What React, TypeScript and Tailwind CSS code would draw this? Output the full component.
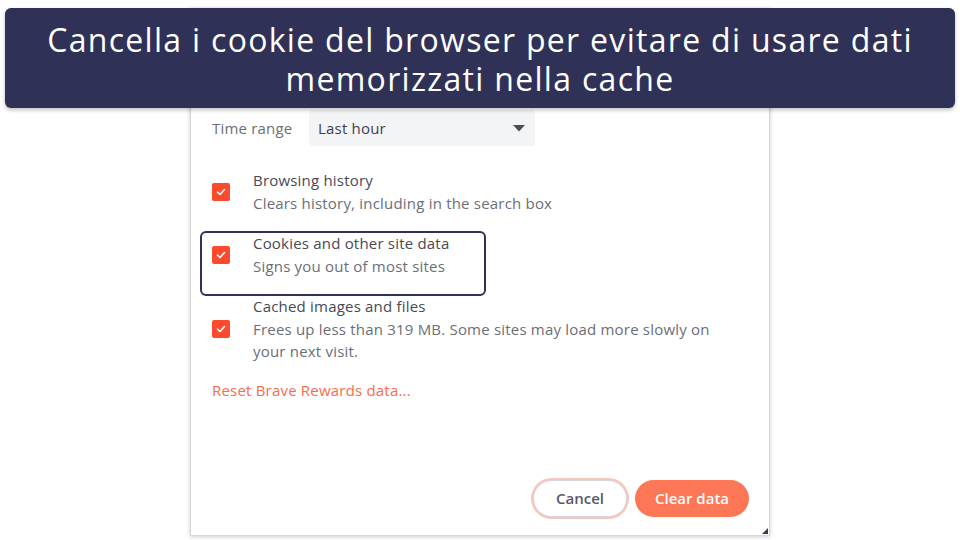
import React from "react";

const Check = () => (
  <div className="w-[18px] h-[18px] rounded-[2px] bg-[#fb4a2e] flex items-center justify-center shrink-0">
    <svg width="12" height="12" viewBox="0 0 12 12" fill="none">
      <path d="M2.5 6.2 L5 8.5 L9.5 3.5" stroke="white" strokeWidth="1.6" strokeLinecap="round" strokeLinejoin="round" />
    </svg>
  </div>
);

function Row({ title, lines, highlight }: { title: string; lines: string[]; highlight?: boolean }) {
  return (
    <div className="relative flex items-center">
      {highlight && (
        <div className="absolute left-[-12px] top-[-1px] w-[286px] h-[65px] border-2 border-[#2f3157] rounded-[6px]" />
      )}
      <Check />
      <div className="ml-[23px] text-[15px] leading-[22.5px] tracking-[0.2px]">
        <div className="text-[#474a55]">{title}</div>
        {lines.map((l, i) => (
          <div key={i} className="text-[#6b6e78]">{l}</div>
        ))}
      </div>
    </div>
  );
}

export default function App() {
  return (
    <div className="relative w-[960px] h-[540px] bg-white overflow-hidden" style={{ fontFamily: '"Open Sans", "Noto Sans", sans-serif' }}>
      <div className="ml-[190px] mt-[8px] w-[580px] h-[528px] bg-white border border-[#d6d7dc] shadow-[0_1px_4px_rgba(60,64,90,0.25)] relative flex flex-col">
        <div className="pl-[21px] pr-[20px] pt-[101px] flex flex-col flex-1">
          <div className="flex items-center">
            <div className="w-[97px] text-[15px] tracking-[0.2px] text-[#6b6e78]">Time range</div>
            <div className="w-[226px] h-[36px] bg-[#f3f4f6] rounded-[4px] flex items-center justify-between pl-[9px] pr-[10px]">
              <span className="text-[15px] tracking-[0.2px] text-[#3e414c]">Last hour</span>
              <svg width="12" height="7" viewBox="0 0 12 7"><path d="M0 0 L12 0 L6 6.5 Z" fill="#4a4d57" /></svg>
            </div>
          </div>
          <div className="mt-[23px] flex flex-col gap-[18px]">
            <Row title="Browsing history" lines={["Clears history, including in the search box"]} />
            <Row title="Cookies and other site data" lines={["Signs you out of most sites"]} highlight />
            <Row title="Cached images and files" lines={["Frees up less than 319 MB. Some sites may load more slowly on", "your next visit."]} />
          </div>
          <div className="mt-[16px] text-[15px] leading-[22px] tracking-[0.2px] text-[#fa6b4c]">Reset Brave Rewards data...</div>
          <div className="mt-auto mb-[18px] flex justify-end gap-[8px]">
            <button className="w-[94px] h-[37px] rounded-full bg-white border border-[#d5d6dc] ring-2 ring-[#f8c6ba] text-[15px] font-semibold text-[#565869]">Cancel</button>
            <button className="w-[114px] h-[37px] rounded-full bg-[#fd7656] text-[15px] font-semibold text-white">Clear data</button>
          </div>
        </div>
        <div className="absolute right-[1px] bottom-[1px] w-0 h-0 border-l-[6px] border-l-transparent border-b-[6px] border-b-[#3a3c55]" />
      </div>
      <div className="absolute left-[5px] top-[8px] w-[950px] h-[100px] bg-[#2f3157] rounded-[6px] shadow-[0_2px_4px_rgba(0,0,0,0.25)] flex items-center justify-center">
        <div className="text-white text-[32px] leading-[39px] tracking-[1.3px] text-center pt-[1px]">
          Cancella i cookie del browser per evitare di usare dati<br />memorizzati nella cache
        </div>
      </div>
    </div>
  );
}
